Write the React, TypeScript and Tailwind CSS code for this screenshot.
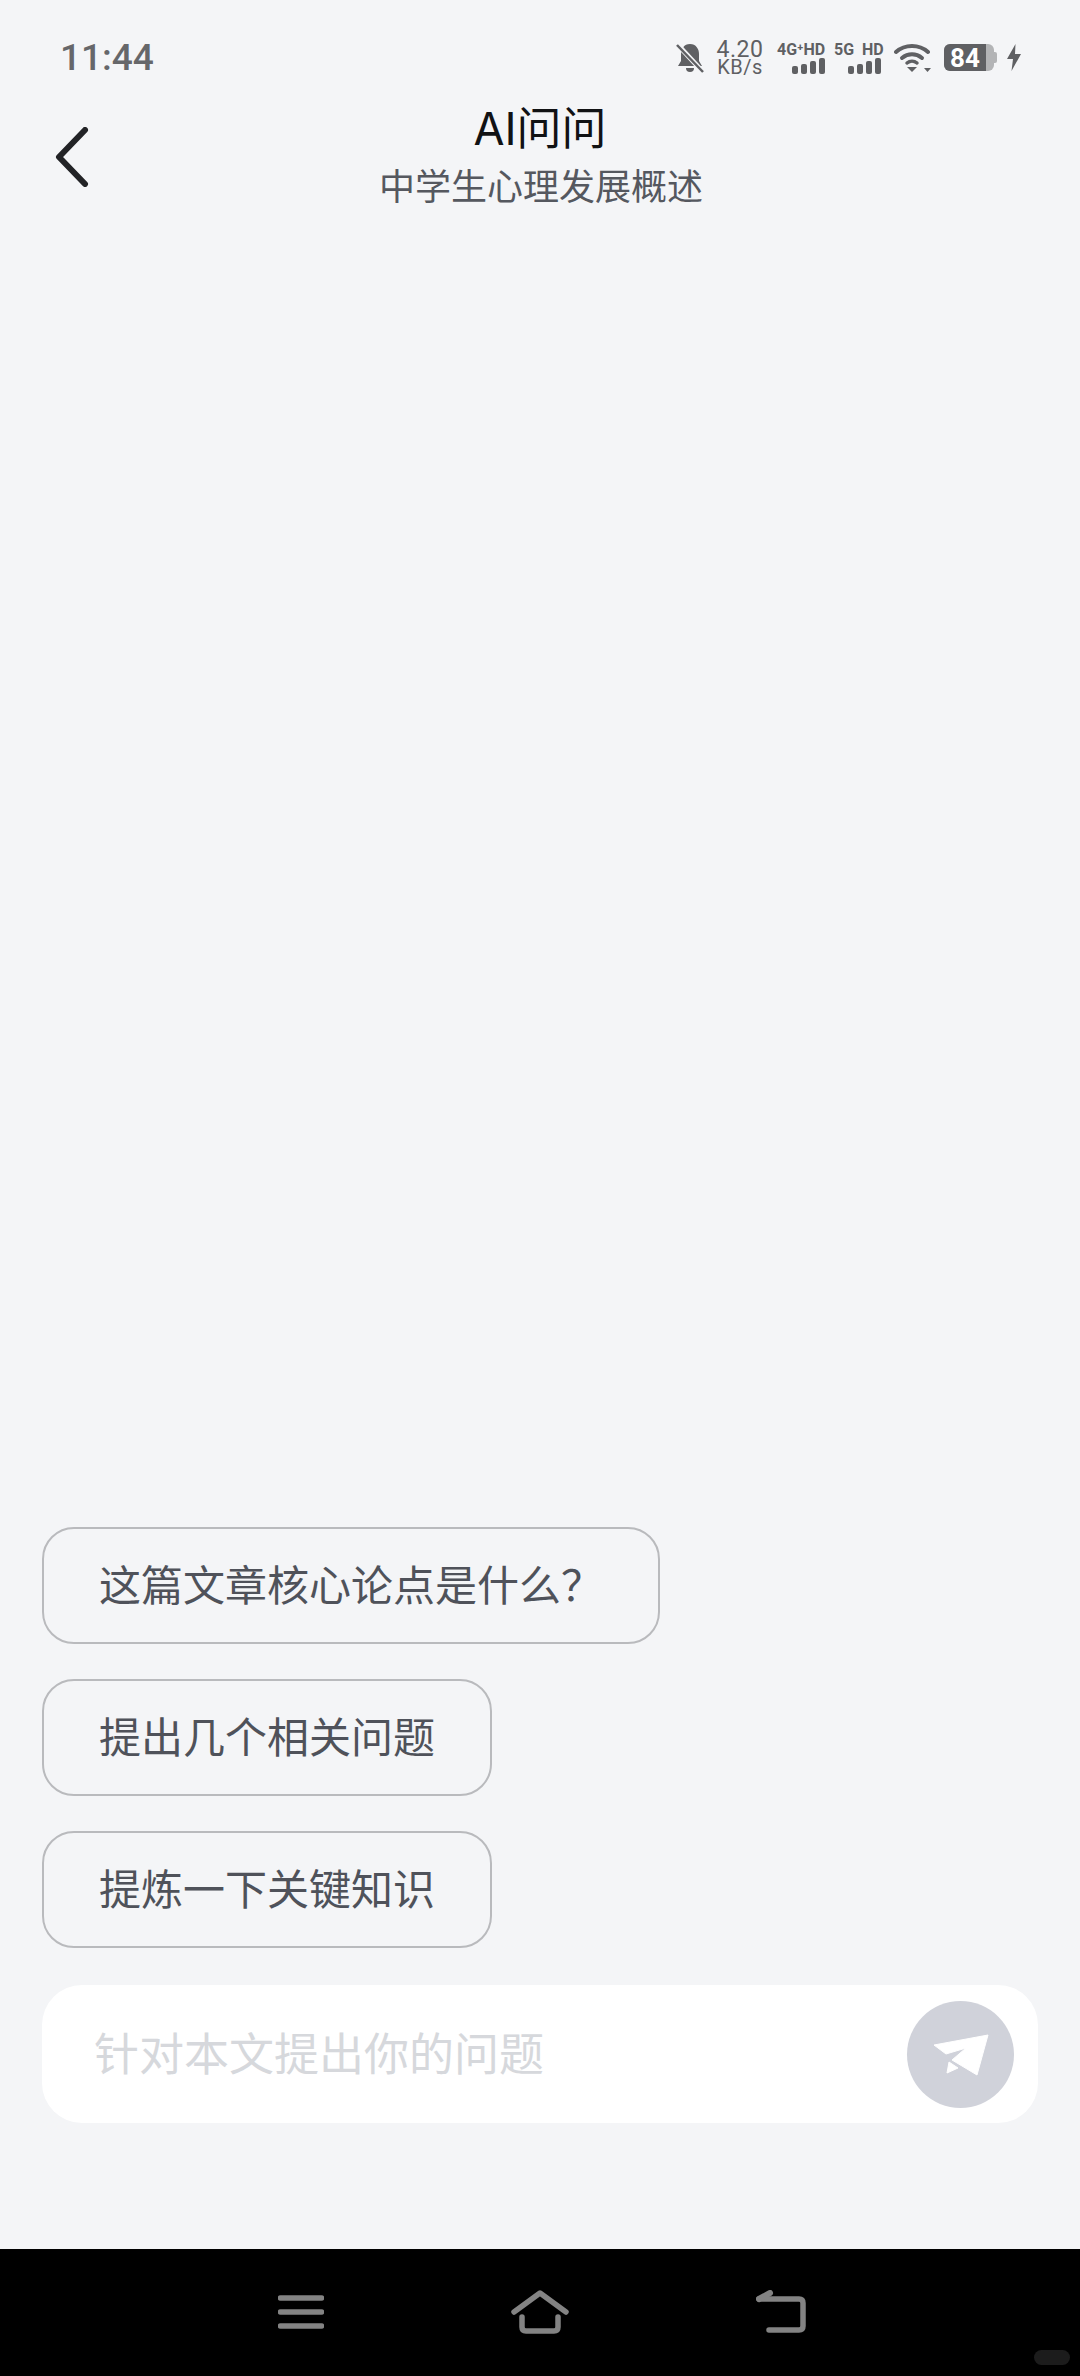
import React from "react";

const CJK = "font-['Inter','Noto_Sans_CJK_SC',sans-serif]";

const questions = ["这篇文章核心论点是什么？", "提出几个相关问题", "提炼一下关键知识"];

const SignalBars = () => (
  <div className="flex items-end justify-end gap-[3px] h-[16px]">
    <div className="w-[6px] h-[8px] rounded-[2px] bg-[#5f6063]" />
    <div className="w-[6px] h-[10px] rounded-[2px] bg-[#5f6063]" />
    <div className="w-[6px] h-[13px] rounded-[2px] bg-[#5f6063]" />
    <div className="w-[6px] h-[16px] rounded-[2px] bg-[#5f6063]" />
  </div>
);

const StatusBar = () => (
  <div className="flex items-center justify-between h-[88px] pl-[60px] pr-[59px] pt-[27px] text-[#5f6063]">
    <span className="font-['Roboto',sans-serif] font-medium text-[37px] leading-none text-[#66676a]">11:44</span>
    <div className="flex items-center">
      <svg width="28" height="30" viewBox="0 0 28 30" className="mr-[12px]">
        <path d="M14 1c-6 0-9 5-9 10v7l-3 5h24l-3-5v-7c0-5-3-10-9-10z" fill="#5f6063" />
        <path d="M10 25a4 4 0 0 0 8 0z" fill="#5f6063" />
        <path d="M1 1l26 28" stroke="#f4f5f7" strokeWidth="5" />
        <path d="M1 2l26 27" stroke="#5f6063" strokeWidth="2.5" />
      </svg>
      <div className="flex flex-col items-center w-[48px] font-['Roboto',sans-serif] text-[#5f6063] mr-[13px]">
        <span className="text-[23px] leading-[19px] tracking-[0.5px]">4.20</span>
        <span className="text-[20px] leading-[17px] tracking-[0.5px]">KB/s</span>
      </div>
      <div className="flex flex-col w-[48px] mr-[9px]">
        <span className="font-['Roboto',sans-serif] font-bold text-[16px] leading-[16px] whitespace-nowrap">4G⁺HD</span>
        <SignalBars />
      </div>
      <div className="flex flex-col w-[47px] mr-[13px]">
        <span className="font-['Roboto',sans-serif] font-bold text-[16px] leading-[16px] whitespace-nowrap">5G&nbsp;&nbsp;HD</span>
        <SignalBars />
      </div>
      <svg width="38" height="30" viewBox="0 0 38 30" className="mr-[12px]">
        <path d="M2 9c9-8 23-8 32 0" fill="none" stroke="#5f6063" strokeWidth="4" strokeLinecap="round" />
        <path d="M8 15c6-5 14-5 20 0" fill="none" stroke="#5f6063" strokeWidth="4" strokeLinecap="round" />
        <path d="M13 20c3-2.500 7-2.500 10 0" fill="none" stroke="#5f6063" strokeWidth="3.500" strokeLinecap="round" />
        <path d="M13 24h10l-5 5z" fill="#5f6063" />
        <path d="M30 25h7l-3.500 4z" fill="#5f6063" />
      </svg>
      <div className="flex items-center mr-[10px]">
        <div className="flex h-[27px] w-[50px] overflow-hidden rounded-[6px] bg-[#b3b4b6]">
          <div className="flex w-[42px] items-center justify-center bg-[#5f6063] font-['Roboto',sans-serif] font-bold text-[26px] leading-none text-white">84</div>
        </div>
        <div className="h-[11px] w-[3px] rounded-r-[2px] bg-[#b3b4b6]" />
      </div>
      <svg width="14" height="27" viewBox="0 0 14 27">
        <path d="M8.500 0L0 15h6l-1.500 12L14 10H8z" fill="#5f6063" />
      </svg>
    </div>
  </div>
);

const Header = () => (
  <div className={`grid grid-cols-[1fr_auto_1fr] items-start ${CJK}`}>
    <div className="pl-[54px] pt-[39px]">
      <svg width="36" height="60" viewBox="0 0 36 60">
        <path d="M31 3L5 30l26 27" fill="none" stroke="#222326" strokeWidth="6" strokeLinecap="round" strokeLinejoin="round" />
      </svg>
    </div>
    <div className="flex flex-col items-center pt-[11px]">
      <h1 className="text-[45px] leading-[60px] text-[#111214]">AI问问</h1>
      <p className="text-[36px] leading-[54px] text-[#55585f] mt-[1px] translate-x-[1px]">中学生心理发展概述</p>
    </div>
    <div />
  </div>
);

const Composer = () => (
  <div className="flex items-center justify-between h-[138px] rounded-[40px] bg-white pl-[52px] pr-[24px]">
    <span className={`text-[45px] leading-none text-[#d6d8dc] ${CJK}`}>针对本文提出你的问题</span>
    <button className="flex h-[107px] w-[107px] items-center justify-center rounded-full bg-[#d0d2da]">
      <svg width="107" height="107" viewBox="0 0 107 107">
        <path d="M81 34L27 44l12 9 20-6-14 12 25 15z" fill="#fff" strokeLinejoin="round" stroke="#fff" strokeWidth="1" />
        <path d="M42 61l-2 11 11-5z" fill="#fff" strokeLinejoin="round" stroke="#fff" strokeWidth="1" />
      </svg>
    </button>
  </div>
);

const NavBar = () => (
  <div className="relative flex h-[127px] items-start justify-center bg-black pt-[41px] pl-[4px]">
    <div className="flex items-center gap-[187px]">
      <svg width="46" height="38" viewBox="0 0 46 38">
        <path d="M2.500 5h41M2.500 19h41M2.500 33h41" stroke="#838383" strokeWidth="5.500" strokeLinecap="round" />
      </svg>
      <svg width="58" height="44" viewBox="0 0 58 44">
        <path d="M3 22L29 3l26 19" fill="none" stroke="#838383" strokeWidth="5.500" strokeLinecap="round" strokeLinejoin="round" />
        <path d="M11 27v10q0 4 4 4h28q4 0 4-4V27" fill="none" stroke="#838383" strokeWidth="5.500" strokeLinecap="round" />
      </svg>
      <svg width="50" height="44" viewBox="0 0 50 44">
        <path d="M3 9h40q4 0 4 4v23q0 4-4 4H13" fill="none" stroke="#838383" strokeWidth="5.500" strokeLinecap="round" />
        <path d="M3 9l11-6" fill="none" stroke="#838383" strokeWidth="6" strokeLinecap="round" />
      </svg>
    </div>
    <div className="absolute right-[10px] bottom-[11px] h-[15px] w-[36px] rounded-full bg-[#1c1c1c]" />
  </div>
);

export default function App() {
  return (
    <div className="flex h-[2376px] w-[1080px] flex-col overflow-hidden bg-[#f4f5f7]">
      <StatusBar />
      <Header />
      <div className="flex flex-1 flex-col justify-end px-[42px] pb-[126px]">
        <div className="flex flex-col items-start gap-[35px] mb-[37px]">
          {questions.map((q) => (
            <button
              key={q}
              className={`flex h-[117px] items-center rounded-[32px] border-2 border-[#b9babd] px-[55px] text-[42px] leading-none text-[#4f525a] ${CJK}`}
            >
              {q}
            </button>
          ))}
        </div>
        <Composer />
      </div>
      <NavBar />
    </div>
  );
}
